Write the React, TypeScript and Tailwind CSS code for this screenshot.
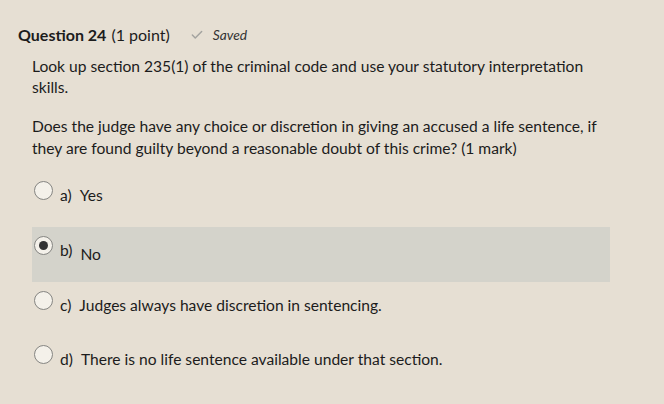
import { Check } from "lucide-react";

const options = [
  { key: "a)", text: "Yes" },
  { key: "b)", text: "No", selected: true },
  { key: "c)", text: "Judges always have discretion in sentencing." },
  { key: "d)", text: "There is no life sentence available under that section." },
];

function Radio({ checked }: { checked?: boolean }) {
  return (
    <span className="w-[19px] h-[19px] rounded-full border border-[#858582] bg-[#f4f1ea] flex items-center justify-center shrink-0">
      {checked && <span className="w-[9px] h-[9px] rounded-full bg-[#333]" />}
    </span>
  );
}

export default function App() {
  return (
    <div
      className="w-[664px] h-[404px] bg-[#e6dfd3] text-[#1c1c1c] overflow-hidden"
      style={{ fontFamily: "Lato, 'Open Sans', sans-serif" }}
    >
      {/* header */}
      <div className="flex items-center pl-[18px] pt-[25px] h-[45px]">
        <span className="text-[16px] font-bold leading-5">Question 24</span>
        <span className="text-[16px] leading-5 ml-[5px]">(1 point)</span>
        <Check className="ml-[20px] text-[#a3a39f]" size={14} strokeWidth={2.5} />
        <span className="ml-[9px] text-[13.8px] italic text-[#333]">Saved</span>
      </div>

      <div className="pl-[32px] w-[610px]">
        <p className="mt-[11px] text-[15.6px] leading-[21px]">
          Look up section 235(1) of the criminal code and use your statutory interpretation
          skills.
        </p>
        <p className="mt-[17px] text-[15.6px] leading-[22px]">
          Does the judge have any choice or discretion in giving an accused a life sentence, if
          they are found guilty beyond a reasonable doubt of this crime? (1 mark)
        </p>
      </div>

      {/* answers */}
      <div className="mt-[9px] pl-[32px] w-[610px] flex flex-col">
        {options.map((o, i) => (
          <div
            key={o.key}
            className={
              o.selected
                ? "h-[55px] bg-[#d4d3cb] flex items-start pt-[9px] pl-[2px] mt-[5px]"
                : i === 0
                ? "h-[54px] flex items-start pt-[13px] pl-[2px]"
                : i === 2
                ? "h-[45px] flex items-start pt-[9px] pl-[2px]"
                : "h-[55px] flex items-start pt-[18px] pl-[2px]"
            }
          >
            <Radio checked={o.selected} />
            <span className="ml-[7px] text-[15.6px] leading-5 mt-[4px]">{o.key}</span>
            <span
              className={
                o.selected
                  ? "ml-[8px] text-[15.6px] leading-5 mt-[8px]"
                  : "ml-[8px] text-[15.6px] leading-5 mt-[4px]"
              }
            >
              {o.text}
            </span>
          </div>
        ))}
      </div>
    </div>
  );
}
